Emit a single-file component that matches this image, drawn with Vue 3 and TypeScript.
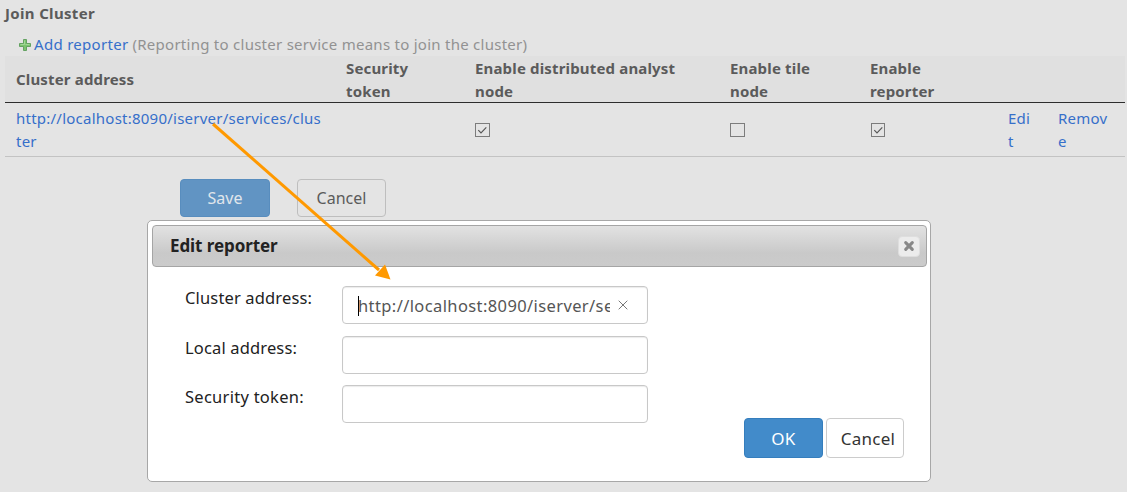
<script setup lang="ts">
interface Column { key: string; lines: string[] }

const columns: Column[] = [
  { key: 'address', lines: ['Cluster address'] },
  { key: 'token', lines: ['Security', 'token'] },
  { key: 'analyst', lines: ['Enable distributed analyst', 'node'] },
  { key: 'tile', lines: ['Enable tile', 'node'] },
  { key: 'reporter', lines: ['Enable', 'reporter'] },
  { key: 'edit', lines: [] },
  { key: 'remove', lines: [] },
]
const flags = [
  { key: 'analyst', on: true },
  { key: 'tile', on: false },
  { key: 'reporter', on: true },
]
const fields = [
  { key: 'cluster', label: 'Cluster address:', value: 'http://localhost:8090/iserver/services/cluster' },
  { key: 'local', label: 'Local address:', value: '' },
  { key: 'security', label: 'Security token:', value: '' },
]
</script>

<template>
  <main class="page">
    <h1>Join Cluster</h1>
    <div class="add">
      <svg class="plus" width="12" height="12" viewBox="0 0 12 12">
        <path d="M4.5 .5h3v4h4v3h-4v4h-3v-4h-4v-3h4z" fill="#7cc46f" stroke="#64a262" stroke-linejoin="round" />
        <path d="M5.5 1.5v4h-4M6.5 5.5h4" fill="none" stroke="#a3d898" />
      </svg>
      <a class="t-add">Add reporter</a>
      <span class="hint">(Reporting to cluster service means to join the cluster)</span>
    </div>

    <section class="table">
      <div class="row head">
        <div v-for="c in columns" :key="c.key" class="cell" :class="'h-' + c.key">
          <div v-for="l in c.lines" :key="l">{{ l }}</div>
        </div>
      </div>
      <div class="row body">
        <div class="cell link url">http://localhost:8090/iserver/services/clus<br>ter</div>
        <div class="cell"></div>
        <div v-for="f in flags" :key="f.key" class="cell check" :class="f.key">
          <span class="box"><svg v-if="f.on" width="13" height="12" viewBox="0 0 13 12"><path d="M2.3 6.2 5 8.9l5.3-5.5" fill="none" stroke="#555" stroke-width="1.15" /></svg></span>
        </div>
        <div class="cell link edit">Edi<br>t</div>
        <div class="cell link remove">Remov<br>e</div>
      </div>
    </section>

    <div class="actions">
      <button class="save">Save</button>
      <button class="cancel">Cancel</button>
    </div>

    <section class="dialog">
      <header>
        <span class="dialog-title">Edit reporter</span>
        <button class="close">
          <svg width="12" height="12" viewBox="0 0 12 12"><path d="m2.7 2.7 6.6 6.6m0-6.6L2.7 9.3" stroke="#888" stroke-width="3.1" stroke-linecap="round" /></svg>
        </button>
      </header>
      <div class="form">
        <div v-for="f in fields" :key="f.key" class="field" :class="f.key">
          <label>{{ f.label }}</label>
          <div class="input">
            <template v-if="f.value">
              <i class="caret"></i>
              <span class="value">{{ f.value }}</span>
              <svg class="clear" width="10" height="10" viewBox="0 0 10 10"><path d="m.7.7 8.6 8.6m0-8.6L.7 9.3" stroke="#777" stroke-width="1" /></svg>
            </template>
          </div>
        </div>
      </div>
      <footer>
        <button class="ok">OK</button>
        <button class="dismiss">Cancel</button>
      </footer>
    </section>

    <svg class="arrow" width="1127" height="492" viewBox="0 0 1127 492">
      <path d="M213 124 379 270" stroke="#ff9900" stroke-width="3" />
      <path d="m390.5 279.5-15.5-4 10-11z" fill="#ff9900" />
    </svg>
  </main>
</template>

<style>
body { margin: 0; background: #e4e4e4; }
</style>

<style scoped>
* { box-sizing: border-box; }
.page {
  position: relative; height: 492px; overflow: hidden; background: #e4e4e4; color: #5b5b5b;
  font: 15px/23px "Noto Sans", "Open Sans", sans-serif; white-space: nowrap;
}
h1 { margin: 0; padding: 2px 0 0 5px; height: 33px; font-size: 15px; font-weight: 700; line-height: 23px; letter-spacing: .33px; }
.add { display: flex; align-items: center; height: 23px; padding-left: 19px; }
.plus { flex: none; margin-top: 1px; margin-right: 3px; }
.t-add, .link { color: #366fca; letter-spacing: .24px; }
.t-add { letter-spacing: .3px; }
.hint { margin-left: 4px; color: #929292; letter-spacing: .265px; }
.table { margin-left: 5px; width: 1120px; }
.row { display: grid; grid-template-columns: 330px 129px 255px 140px 138px 50px 78px; }
.cell { padding-left: 11px; }
.head { height: 47px; padding-top: 1px; background: #e0e0e0; border-bottom: 1px solid #2d2d2d; font-weight: 700; letter-spacing: .16px; }
.h-address { padding-top: 11px; }
.body { height: 54px; padding-top: 4px; border-bottom: 1px solid #c3c3c3; }
.check { padding-top: 16px; line-height: 0; }
.box { display: inline-block; width: 15px; height: 14px; border: 1px solid #7c7c7c; }
.box svg { display: block; }
.check.reporter { padding-left: 12px; }
.check.reporter .box { width: 14px; }
.actions { display: flex; gap: 27px; padding: 22px 0 0 180px; }
button { display: flex; align-items: center; justify-content: center; margin: 0; padding: 0; border-radius: 4px; font: 16px/23px "Noto Sans", "Open Sans", sans-serif; }
.save { width: 90px; height: 38px; color: #e0e6eb; background: #6194c3; border: 1px solid #588dbe; }
.cancel { width: 89px; height: 38px; color: #5b5b5b; background: #e4e4e4; border: 1px solid #bebebe; }
.dialog { position: absolute; left: 147px; top: 220px; width: 784px; height: 262px; padding: 4px 3px 4px 4px; background: #fff; border: 1px solid #a7a7a7; border-radius: 5px; color: #222; }
header { display: flex; align-items: center; justify-content: space-between; height: 42px; padding: 0 6px 0 17px; border: 1px solid #a5a5a5; border-radius: 4px; background: linear-gradient(#e2e2e2, #c9c9c9 68%, #cbcbcb); }
.dialog-title { padding-bottom: 2px; font-size: 17px; font-weight: 700; letter-spacing: -.08px; }
.close { width: 22px; height: 21px; background: #ececec; border: 1px solid #dedede; }
.form { display: flex; flex-direction: column; gap: 12px; padding: 19px 0 0 33px; }
.field { display: flex; height: 38px; font-size: 16.5px; letter-spacing: .15px; }
.field.security { margin-top: -1px; }
.field.security label { letter-spacing: .27px; }
.field label { width: 157px; }
.input { position: relative; display: flex; align-items: center; width: 306px; height: 38px; padding: 0 17px 0 15px; border: 1px solid #c8c8c8; border-radius: 4px; box-shadow: inset 0 1px 1px rgba(0, 0, 0, .08); }
.caret { position: absolute; left: 15px; top: 9px; width: 1px; height: 20px; background: #000; }
.value { width: 252px; padding-top: 1px; overflow: hidden; color: #555; font-size: 16.5px; letter-spacing: .39px; }
.clear { margin-left: 8px; flex: none; }
footer { display: flex; gap: 3px; justify-content: flex-end; margin-top: -5px; padding-right: 23px; }
.ok { width: 79px; height: 40px; padding-top: 1px; font-size: 17px; letter-spacing: .3px; color: #fff; background: #428bca; border: 1px solid #357ebd; }
.dismiss { width: 78px; height: 40px; padding: 1px 0 0 6px; font-size: 17px; letter-spacing: .25px; color: #333; background: #fff; border: 1px solid #ccc; }
.arrow { position: absolute; inset: 0; pointer-events: none; }
</style>
